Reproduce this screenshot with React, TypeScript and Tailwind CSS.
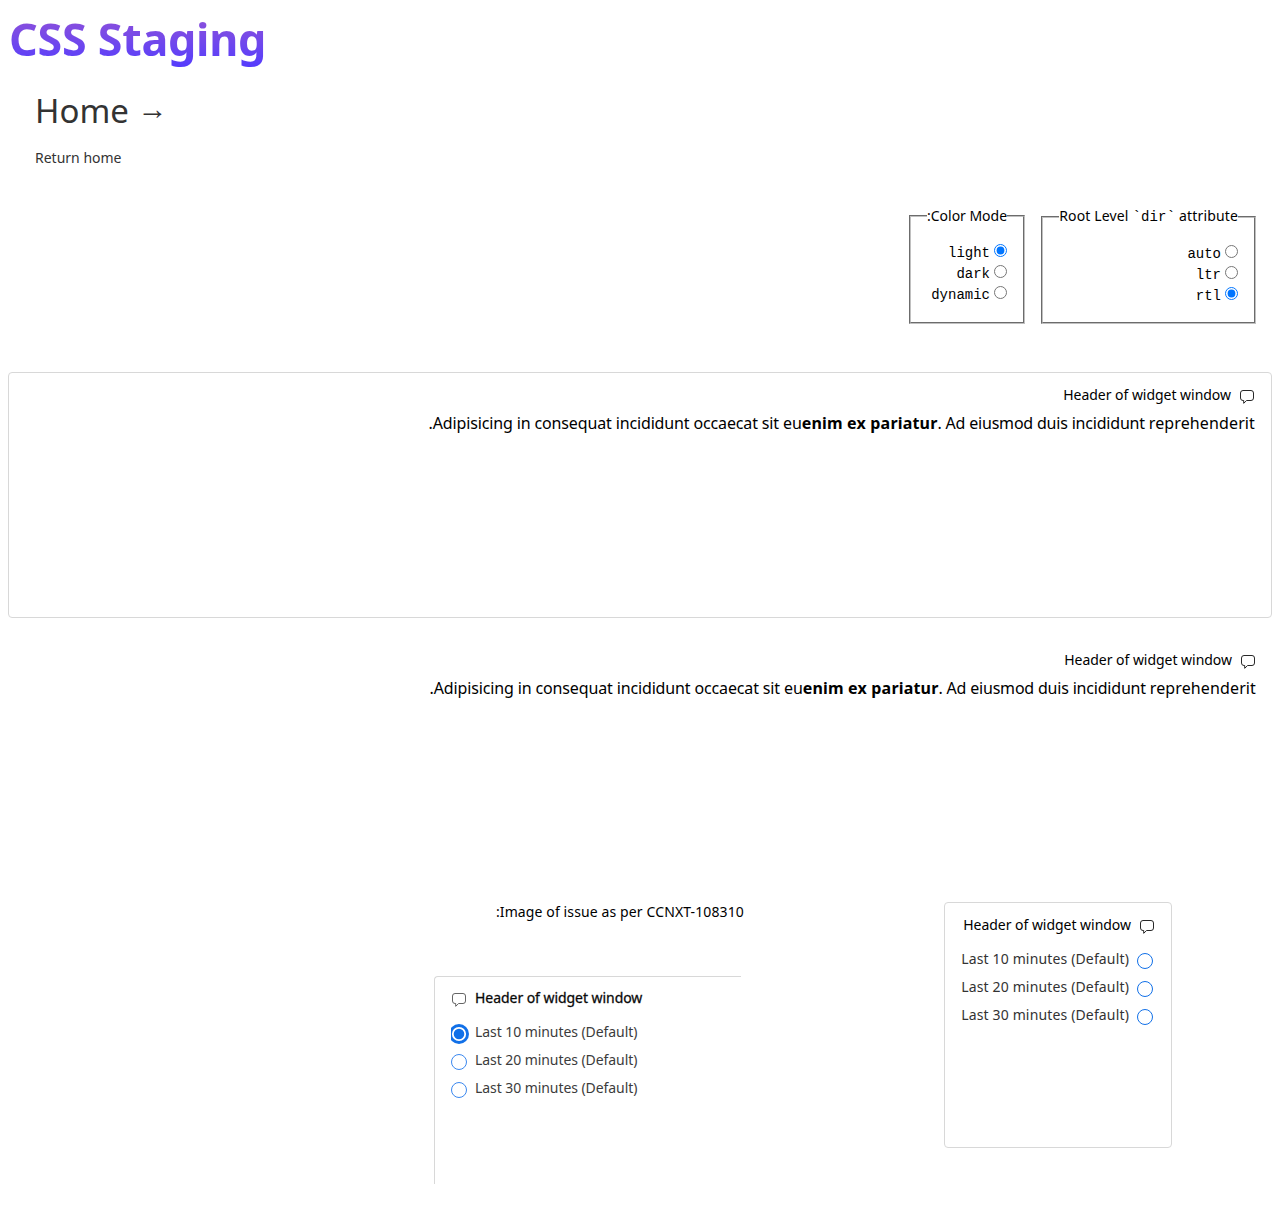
import React from "react";

function ChatIcon({ className = "" }: { className?: string }) {
  return (
    <svg viewBox="0 0 16 16" fill="none" stroke="currentColor" strokeWidth="0.9" className={`size-4 shrink-0 ${className}`}>
      <path
        d="M4 1.5h8A2.5 2.5 0 0 1 14.5 4v5a2.5 2.5 0 0 1-2.5 2.5H7.6L4.7 14.3V11.5H4A2.5 2.5 0 0 1 1.5 9V4A2.5 2.5 0 0 1 4 1.5Z"
        strokeLinejoin="round"
      />
    </svg>
  );
}

function WidgetHeader() {
  return (
    <div className="flex h-6 items-center text-sm leading-6">
      <ChatIcon className="mt-1 text-[#111]" />
      <span className="ms-2 tracking-[-0.03px]">Header of widget window</span>
    </div>
  );
}

function WidgetText() {
  return (
    <p className="mt-1 text-base leading-6">
      <span className="tracking-[-0.14px]">Adipisicing in consequat incididunt occaecat sit eu</span>
      <b className="tracking-[0.19px]">enim ex pariatur</b>
      <span className="tracking-[-0.2px]">. Ad eiusmod duis incididunt </span>
      <span className="tracking-[0.12px]">reprehenderit</span>.
    </p>
  );
}

function Options({ name, values, selected }: { name: string; values: string[]; selected: string }) {
  return (
    <div>
      {values.map((v) => (
        <label key={v} className="flex h-[21px] items-start gap-1 font-['Liberation_Mono'] text-sm leading-[21px]">
          <input type="radio" name={name} defaultChecked={v === selected} className="m-0 mt-[2px] size-[13px]" />
          <span className="pt-px">{v}</span>
        </label>
      ))}
    </div>
  );
}

const minutes = ["Last 10 minutes (Default)", "Last 20 minutes (Default)", "Last 30 minutes (Default)"];

export default function App() {
  return (
    <main className="h-[1225px] overflow-hidden bg-white px-2 font-['Noto_Sans',sans-serif] text-sm text-black" dir="rtl">
      <div dir="ltr">
        <h1 className="mt-2 ml-px w-fit bg-gradient-to-b from-[#9650d4] to-[#5138ff] bg-clip-text text-[44.8px] leading-[62px] font-bold tracking-[-0.25px] text-transparent">
          CSS Staging
        </h1>
        <div className="mt-[17px] ml-[27px] text-[#333]">
          <h2 className="flex text-[33px] leading-12">
            Home
            <span className="-mt-[3px] ml-[8.5px] text-[30px]">→</span>
          </h2>
          <p className="mt-3 leading-[21px]">Return home</p>
        </div>
      </div>

      <div className="mt-[37px] mr-4 flex h-[119px] items-stretch gap-4">
        <fieldset className="w-[215px] border-2 border-[#c0c0c0] px-4 [border-style:groove]">
          <legend className="leading-[21px] tracking-[0.155px] whitespace-nowrap">
            Root Level <span className="font-['Liberation_Mono']">`dir`</span> attribute
          </legend>
          <div className="mt-[15px]">
            <Options name="dir" values={["auto", "ltr", "rtl"]} selected="rtl" />
          </div>
        </fieldset>
        <fieldset className="w-[116px] border-2 border-[#c0c0c0] px-4 [border-style:groove]">
          <legend className="leading-[21px] tracking-[-0.03px] whitespace-nowrap">Color Mode:</legend>
          <div className="mt-4">
            <Options name="mode" values={["light", "dark", "dynamic"]} selected="light" />
          </div>
        </fieldset>
      </div>

      <section className="mt-12 h-[246px] rounded border border-[#d8d8d8] px-4 pt-[10px]">
        <WidgetHeader />
        <WidgetText />
      </section>

      <section className="mt-5 h-[246px] px-4 pt-[10px]">
        <WidgetHeader />
        <WidgetText />
      </section>

      <div className="mt-[18px] mr-[100px] flex items-start">
        <section className="h-[246px] w-[228px] rounded border border-[#d8d8d8] px-4 pt-[10px]">
          <WidgetHeader />
          <div className="mt-[11px]">
            {minutes.map((m) => (
              <div key={m} className="flex h-7 items-start text-[#333]">
                <span className="mt-[5px] mr-[2px] size-4 shrink-0 rounded-full border border-[#1170e8]" />
                <span dir="ltr" className="mr-2 leading-[21px] tracking-[0.15px] whitespace-nowrap">{m}</span>
              </div>
            ))}
          </div>
        </section>
        <figure className="mr-[200px] w-[310px]">
          <figcaption className="-mt-px leading-[21px] tracking-[0.12px]">Image of issue as per CCNXT-108310:</figcaption>
          <div dir="ltr" className="mt-[54px] mr-[3px] h-[208px] w-[307px] rounded-tl border-t border-l border-[#d8d8d8] pt-[9px] pl-4">
            <div className="flex h-6 items-center">
              <ChatIcon className="mt-1 text-[#555]" />
              <span className="ml-2 tracking-[-0.05px] [-webkit-text-stroke:0.3px_#222]">Header of widget window</span>
            </div>
            <div className="mt-[11px]">
              {minutes.map((m, i) => (
                <div key={m} className="flex h-7 items-start text-[#3c3c3c]">
                  {i === 0 ? (
                    <svg viewBox="0 0 18 20" className="mt-[3px] mr-[-2px] h-5 w-[18px] shrink-0">
                      <circle cx="8" cy="10" r="10" fill="#1170e8" />
                      <circle cx="8" cy="10" r="6.2" fill="#1170e8" stroke="#fff" strokeWidth="1.8" />
                    </svg>
                  ) : (
                    <span className="mt-[5px] size-4 shrink-0 rounded-full border border-[#3b88ef]" />
                  )}
                  <span className="ml-2 leading-[21px] tracking-[-0.07px]">{m}</span>
                </div>
              ))}
            </div>
          </div>
        </figure>
      </div>
    </main>
  );
}
